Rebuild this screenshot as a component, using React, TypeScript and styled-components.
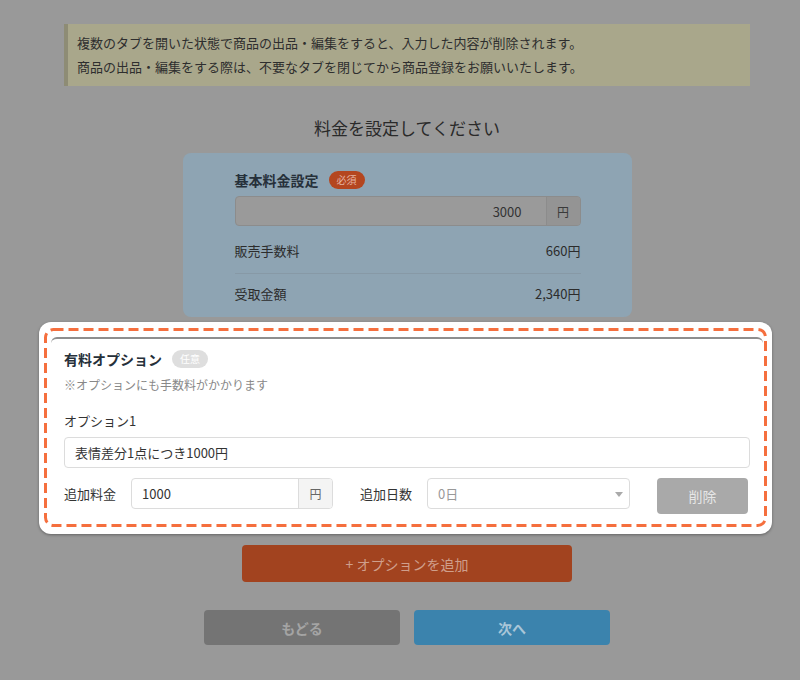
import React from 'react'
import styled, { createGlobalStyle } from 'styled-components'

const GlobalStyle = createGlobalStyle`
  html, body {
    margin: 0;
    background: #999999;
    font-family: "Noto Sans CJK JP", "Noto Sans", sans-serif;
    color: #2b2b2b;
  }
  * { box-sizing: border-box; }
`

const Page = styled.div`
  width: 686px;
  margin-left: 64px;
  padding-top: 24px;
`

const Notice = styled.div`
  background: #a9a78b;
  border-left: 4px solid #8e8c75;
  padding: 7px 12px 7px 9px;
  font-size: 13px;
  line-height: 24px;
  color: #2e2e2e;
`

const Title = styled.h2`
  margin: 30px 0 0;
  text-align: center;
  font-size: 17px;
  line-height: 24px;
  font-weight: 400;
  color: #2a2a2a;
`

const PriceCard = styled.div`
  width: 449px;
  margin: 13px auto 0;
  padding: 16px 51px 3px 52px;
  background: #8ea4b3;
  border-radius: 8px;
`

const Heading = styled.div`
  display: flex;
  align-items: center;
  gap: 10px;
  font-size: 14px;
  font-weight: 700;
  line-height: 22px;
  color: #26303a;
`

const Badge = styled.span<{ $tone: 'required' | 'optional' }>`
  display: inline-flex;
  align-items: center;
  justify-content: center;
  width: 36px;
  height: 18px;
  border-radius: 9px;
  font-size: 10px;
  font-weight: 400;
  background: ${p => (p.$tone === 'required' ? '#b4461f' : '#dedede')};
  color: ${p => (p.$tone === 'required' ? '#e6b4a2' : '#ffffff')};
`

const InputGroup = styled.div<{ $dim?: boolean; $width?: string }>`
  display: flex;
  height: ${p => (p.$dim ? '30px' : '31px')};
  width: ${p => p.$width || '100%'};
  border: 1px solid ${p => (p.$dim ? '#8c8c8c' : '#dcdcdc')};
  border-radius: 4px;
  background: ${p => (p.$dim ? '#9a9a9a' : '#ffffff')};
  overflow: hidden;
  flex-shrink: 0;
`

const Field = styled.div<{ $right?: boolean; $muted?: boolean }>`
  flex: 1;
  display: flex;
  align-items: center;
  justify-content: ${p => (p.$right ? 'flex-end' : 'flex-start')};
  padding: ${p => (p.$right ? '0 24px 0 0' : '0 10px')};
  font-size: 13px;
  color: ${p => (p.$muted ? '#999' : '#333')};
`

const Addon = styled.div<{ $dim?: boolean }>`
  width: 34px;
  display: flex;
  align-items: center;
  justify-content: center;
  font-size: 12px;
  background: ${p => (p.$dim ? '#949494' : '#f4f4f4')};
  border-left: 1px solid ${p => (p.$dim ? '#8c8c8c' : '#dcdcdc')};
  color: ${p => (p.$dim ? '#3a3a3a' : '#666')};
`

const FeeRow = styled.div<{ $last?: boolean }>`
  display: flex;
  justify-content: space-between;
  font-size: 13px;
  line-height: 20px;
  color: #2c2c2c;
  padding: ${p => (p.$last ? '10px 0' : '15px 0 12px')};
  border-bottom: ${p => (p.$last ? 'none' : '1px solid #8799a6')};
`

const Spotlight = styled.div`
  margin: 5px -22px 0 -25px;
  padding: 6px 5px 7px;
  background: #ffffff;
  border-radius: 12px;
  box-shadow: 0 1px 3px rgba(0, 0, 0, 0.35);
`

const DashFrame = styled.div`
  position: relative;
  display: flow-root;
  border-radius: 9px;
`

const DashSvg = styled.svg`
  position: absolute;
  inset: 0;
  width: 100%;
  height: 100%;
  pointer-events: none;
  overflow: visible;
  rect {
    width: calc(100% - 3px);
    height: calc(100% - 3px);
  }
`

const OptionSection = styled.div`
  margin: 9px 4px 0 7px;
  padding: 9px 13px 13px;
  border-top: 2px solid #8e8e8e;
  border-radius: 6px 6px 0 0;
`

const Note = styled.div`
  margin-top: 6px;
  font-size: 12px;
  line-height: 18px;
  color: #888;
`

const Label = styled.div`
  margin-top: 17px;
  font-size: 13px;
  line-height: 20px;
  color: #333;
`

const Wide = styled.div`
  margin-top: 6px;
`

const OptionRow = styled.div`
  display: flex;
  align-items: flex-start;
  margin-top: 10px;
`

const RowLabel = styled.div<{ $gapLeft?: number }>`
  font-size: 13px;
  line-height: 31px;
  color: #333;
  margin: 0 15px 0 ${p => p.$gapLeft || 0}px;
  white-space: nowrap;
`

const Select = styled.div`
  position: relative;
  width: 203px;
  height: 31px;
  border: 1px solid #dcdcdc;
  border-radius: 4px;
  display: flex;
  align-items: center;
  padding: 0 10px;
  font-size: 13px;
  color: #999;
  &::after {
    content: '';
    position: absolute;
    right: 6px;
    top: 13px;
    border-left: 4px solid transparent;
    border-right: 4px solid transparent;
    border-top: 5px solid #aaa;
  }
`

const DeleteButton = styled.button`
  margin-left: 27px;
  width: 91px;
  height: 36px;
  border: none;
  border-radius: 4px;
  background: #a9a9a9;
  color: #e6e6e6;
  font-family: inherit;
  font-size: 14px;
`

const AddButton = styled.button`
  display: block;
  width: 330px;
  height: 37px;
  margin: 11px auto 0;
  border: none;
  border-radius: 4px;
  background: #a2431f;
  color: #cf9f8c;
  font-family: inherit;
  font-size: 14px;
`

const NavRow = styled.div`
  display: flex;
  justify-content: center;
  gap: 14px;
  margin-top: 28px;
`

const NavButton = styled.button<{ $primary?: boolean }>`
  width: 196px;
  height: 35px;
  border: none;
  border-radius: 4px;
  background: ${p => (p.$primary ? '#3b83ad' : '#747474')};
  color: ${p => (p.$primary ? '#a9c6d8' : '#a4a4a4')};
  font-family: inherit;
  font-size: 14px;
  font-weight: 700;
`

const App = () => {
  return (
    <>
      <GlobalStyle />
      <Page>
        <Notice>
          複数のタブを開いた状態で商品の出品・編集をすると、入力した内容が削除されます。
          <br />
          商品の出品・編集をする際は、不要なタブを閉じてから商品登録をお願いいたします。
        </Notice>

        <Title>料金を設定してください</Title>

        <PriceCard>
          <Heading>
            基本料金設定
            <Badge $tone="required">必須</Badge>
          </Heading>
          <InputGroup $dim style={{ marginTop: 5 }}>
            <Field $right>3000</Field>
            <Addon $dim>円</Addon>
          </InputGroup>
          <FeeRow>
            <span>販売手数料</span>
            <span>660円</span>
          </FeeRow>
          <FeeRow $last>
            <span>受取金額</span>
            <span>2,340円</span>
          </FeeRow>
        </PriceCard>

        <Spotlight>
          <DashFrame>
            <DashSvg>
              <rect x="1.5" y="1.5" rx="8" ry="8" fill="none" stroke="#f56f3e" strokeWidth="3" strokeDasharray="10 5" />
            </DashSvg>
            <OptionSection>
              <Heading>
                有料オプション
                <Badge $tone="optional">任意</Badge>
              </Heading>
              <Note>※オプションにも手数料がかかります</Note>
              <Label>オプション1</Label>
              <Wide>
                <InputGroup>
                  <Field>表情差分1点につき1000円</Field>
                </InputGroup>
              </Wide>
              <OptionRow>
                <RowLabel>追加料金</RowLabel>
                <InputGroup $width="202px">
                  <Field>1000</Field>
                  <Addon>円</Addon>
                </InputGroup>
                <RowLabel $gapLeft={27}>追加日数</RowLabel>
                <Select>0日</Select>
                <DeleteButton>削除</DeleteButton>
              </OptionRow>
            </OptionSection>
          </DashFrame>
        </Spotlight>

        <AddButton>+ オプションを追加</AddButton>

        <NavRow>
          <NavButton>もどる</NavButton>
          <NavButton $primary>次へ</NavButton>
        </NavRow>
      </Page>
    </>
  )
}

export default App
